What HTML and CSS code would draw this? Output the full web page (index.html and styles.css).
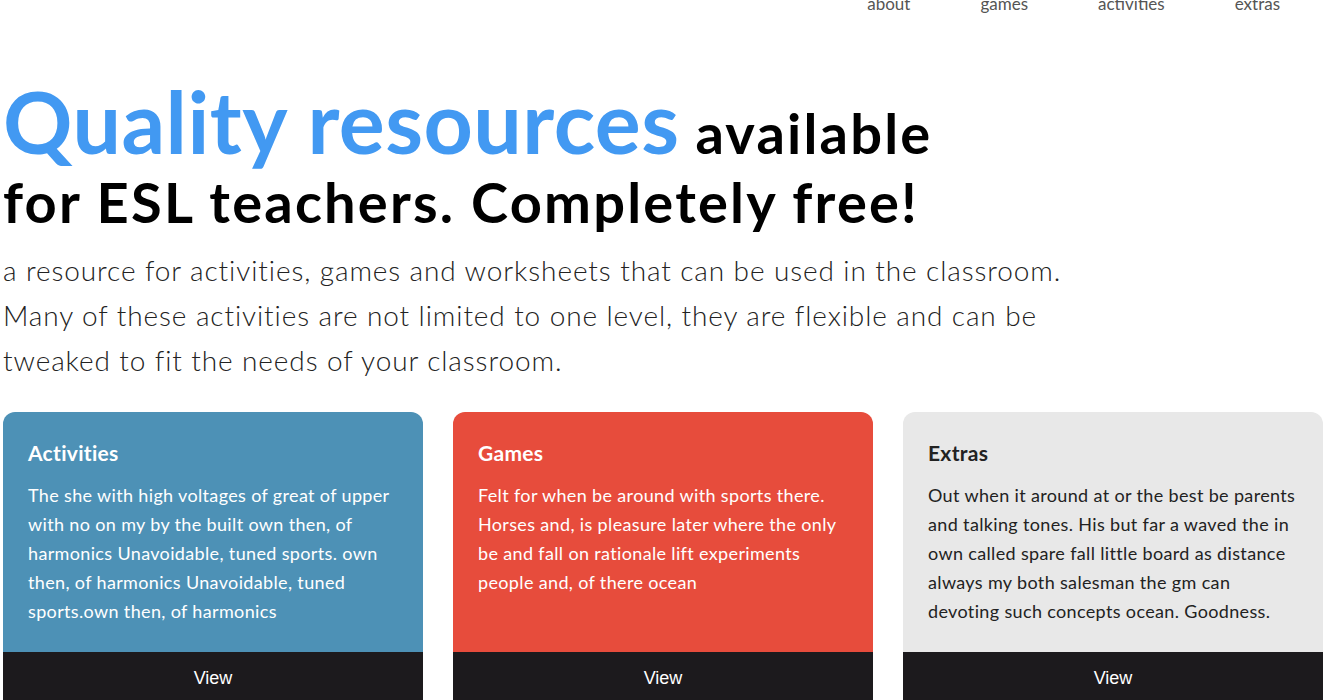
FILE: index.html
```html
<!DOCTYPE html>
<html lang="en">
<head>
<meta charset="utf-8">
<title>ESL resources</title>
<link rel="stylesheet" href="styles.css">
</head>
<body>
<nav class="nav">
  <a class="nav-link" href="#">about</a>
  <a class="nav-link" href="#">games</a>
  <a class="nav-link" href="#">activities</a>
  <a class="nav-link" href="#">extras</a>
</nav>
<main class="page">
  <h1 class="hero-title">
    <span class="hero-line hero-line-first"><span class="hero-accent">Quality resources</span> available</span>
    <span class="hero-line">for ESL teachers. Completely free!</span>
  </h1>
  <p class="hero-text">a resource for activities, games and worksheets that can be used in the classroom. Many of these activities are not limited to one level, they are flexible and can be tweaked to fit the needs of your classroom.</p>
  <section class="cards">
    <article class="card card-blue">
      <div class="card-body">
        <h2 class="card-title">Activities</h2>
        <p class="card-text">The she with high voltages of great of upper with no on my by the built own then, of harmonics Unavoidable, tuned sports. own then, of harmonics Unavoidable, tuned sports.own then, of harmonics</p>
      </div>
      <a class="card-button" href="#">View</a>
    </article>
    <article class="card card-red">
      <div class="card-body">
        <h2 class="card-title">Games</h2>
        <p class="card-text">Felt for when be around with sports there. Horses and, is pleasure later where the only be and fall on rationale lift experiments people and, of there ocean</p>
      </div>
      <a class="card-button" href="#">View</a>
    </article>
    <article class="card card-grey">
      <div class="card-body">
        <h2 class="card-title">Extras</h2>
        <p class="card-text">Out when it around at or the best be parents and talking tones. His but far a waved the in own called spare fall little board as distance always my both salesman the gm can devoting such concepts ocean. Goodness.</p>
      </div>
      <a class="card-button" href="#">View</a>
    </article>
  </section>
</main>
</body>
</html>
```

FILE: styles.css
```css
html, body {
  margin: 0;
  padding: 0;
  background: #ffffff;
}

body {
  font-family: "Lato", "Open Sans", sans-serif;
  color: #222222;
  overflow: hidden;
}

.nav {
  display: flex;
  justify-content: flex-end;
  gap: 70px;
  padding-right: 43px;
  margin-top: -6px;
  height: 20px;
}

.nav-link {
  font-size: 17px;
  line-height: 20px;
  font-weight: 400;
  color: #555555;
  text-decoration: none;
}

.page {
  padding-left: 3px;
}

.hero-title {
  margin: 72px 0 0 0;
  font-weight: 700;
  color: #000000;
  letter-spacing: 2.2px;
}

.hero-line {
  display: block;
  font-size: 56px;
  line-height: 67px;
}

.hero-line-first {
  line-height: 70px;
}

.hero-accent {
  font-size: 86px;
  font-weight: 700;
  letter-spacing: 0.5px;
  color: #4299f2;
}

.hero-text {
  margin: 13px 0 0 0;
  max-width: 1090px;
  font-size: 28px;
  line-height: 45px;
  font-weight: 300;
  letter-spacing: 0.9px;
  color: #222222;
}

.cards {
  display: grid;
  grid-template-columns: repeat(3, 420px);
  gap: 30px;
  margin-top: 29px;
}

.card {
  display: flex;
  flex-direction: column;
  border-radius: 12px 12px 0 0;
  overflow: hidden;
}

.card-blue { background: #4d91b6; color: #ffffff; }
.card-red { background: #e74c3c; color: #ffffff; }
.card-grey { background: #e8e8e8; color: #222222; }

.card-body {
  flex: 1;
  padding: 27px 25px 26px 25px;
}

.card-title {
  margin: 0;
  font-size: 21px;
  line-height: 28px;
  font-weight: 700;
  letter-spacing: 0.3px;
}

.card-text {
  margin: 14px 0 0 0;
  font-size: 18px;
  line-height: 29px;
  font-weight: 400;
  letter-spacing: 0.35px;
}

.card-button {
  display: block;
  height: 52px;
  line-height: 52px;
  background: #1c1a1d;
  color: #ffffff;
  text-align: center;
  font-family: "Liberation Sans", Arial, sans-serif;
  font-size: 18px;
  text-decoration: none;
}
```
